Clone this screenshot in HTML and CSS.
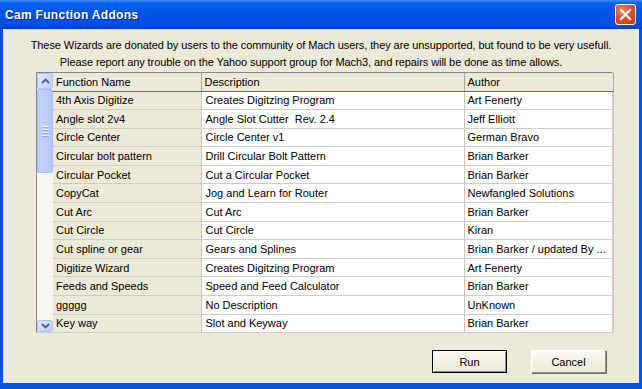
FILE: index.html
```html
<!DOCTYPE html>
<html lang="en">
<head>
    <meta charset="utf-8" />
    <title>Cam Function Addons</title>
    <link rel="stylesheet" href="styles.css">
</head>
<body>

<div class="window">
    <div class="titlebar">
        <span class="title">Cam Function Addons</span>
        <span class="close">
            <svg width="13" height="13" viewBox="0 0 13 13"><path d="M2 2 L11 11 M11 2 L2 11" stroke="#fff" stroke-width="2.2" stroke-linecap="square" /></svg>
        </span>
    </div>

    <div class="client">
        <div class="intro">
            <div>These Wizards are donated by users to the community of Mach users, they are unsupported, but found to be very usefull.</div>
            <div class="second">Please report any trouble on the Yahoo support group for Mach3, and repairs will be done as time allows.</div>
        </div>

        <div class="grid">
            <div class="scroll">
                <div class="sbtn up"><svg width="9" height="6" viewBox="0 0 9 6"><path d="M1 5 L4.5 1.5 L8 5" fill="none" stroke="#4d6185" stroke-width="1.8" /></svg></div>
                <div class="thumb"><span></span><span></span><span></span><span></span></div>
                <div class="track"></div>
                <div class="sbtn down"><svg width="9" height="6" viewBox="0 0 9 6"><path d="M1 1 L4.5 4.5 L8 1" fill="none" stroke="#4d6185" stroke-width="1.8" /></svg></div>
            </div>
            <table class="list">
                <colgroup>
                    <col class="c-name" />
                    <col class="c-desc" />
                    <col class="c-author" />
                </colgroup>
                <thead>
                    <tr><th>Function Name</th><th>Description</th><th>Author</th></tr>
                </thead>
                <tbody>
                    <tr><td>4th Axis Digitize</td><td>Creates Digitzing Program</td><td>Art Fenerty</td></tr>
                    <tr><td>Angle slot 2v4</td><td>Angle Slot Cutter&nbsp; Rev. 2.4</td><td>Jeff Elliott</td></tr>
                    <tr><td>Circle Center</td><td>Circle Center v1</td><td>German Bravo</td></tr>
                    <tr><td>Circular bolt pattern</td><td>Drill Circular Bolt Pattern</td><td>Brian Barker</td></tr>
                    <tr><td>Circular Pocket</td><td>Cut a Circular Pocket</td><td>Brian Barker</td></tr>
                    <tr><td>CopyCat</td><td>Jog and Learn for Router</td><td>Newfangled Solutions</td></tr>
                    <tr><td>Cut Arc</td><td>Cut Arc</td><td>Brian Barker</td></tr>
                    <tr><td>Cut Circle</td><td>Cut Circle</td><td>Kiran</td></tr>
                    <tr><td>Cut spline or gear</td><td>Gears and Splines</td><td>Brian Barker / updated By ...</td></tr>
                    <tr><td>Digitize Wizard</td><td>Creates Digitzing Program</td><td>Art Fenerty</td></tr>
                    <tr><td>Feeds and Speeds</td><td>Speed and Feed Calculator</td><td>Brian Barker</td></tr>
                    <tr><td>ggggg</td><td>No Description</td><td>UnKnown</td></tr>
                    <tr><td>Key way</td><td>Slot and Keyway</td><td>Brian Barker</td></tr>
                </tbody>
            </table>
        </div>

        <div class="buttons">
            <button class="btn default">Run</button>
            <button class="btn">Cancel</button>
        </div>
    </div>
</div>

</body>
</html>
```

FILE: styles.css
```css
body { margin: 0; font-family: "Liberation Sans", Arial, sans-serif; font-size: 11px; color: #000; }

.window { width: 642px; height: 389px; background: #0054e3; display: flex; flex-direction: column; overflow: hidden; }

.titlebar { height: 29px; flex: none; display: flex; align-items: center; justify-content: space-between; padding: 0 6px 0 5px; box-sizing: border-box;
    background: linear-gradient(#3a8cf7 0%, #0a64f0 10%, #0058e8 30%, #0054e3 60%, #0050dc 85%, #0040c0 100%); }
.title { color: #fff; font-weight: bold; font-size: 12px; letter-spacing: 0.3px; text-shadow: 1px 1px 0 #0a1e8c; }
.close { width: 19px; height: 19px; border: 1px solid #fff; border-radius: 3px; display: flex; align-items: center; justify-content: center;
    background: radial-gradient(circle at 35% 30%, #f08a6a 0%, #e0502c 45%, #c8381a 100%); }

.client { flex: 1; background: #ece9d8; margin: 0 3px 6px 3px; display: flex; flex-direction: column; }

.intro { text-align: center; line-height: 17px; padding-top: 8px; letter-spacing: -0.08px; }
.intro .second { padding-right: 20px; }

.grid { display: flex; margin: 1px 0 0 33px; width: 577px; height: 261px; box-sizing: border-box;
    border: 1px solid; border-color: #828790 #d4d0c8 #d4d0c8 #828790; background: #fff; }

.scroll { width: 16px; flex: none; display: flex; flex-direction: column; background: #f6f5f0; }
.sbtn { height: 16px; flex: none; box-sizing: border-box; border: 1px solid #b3c6f3; border-radius: 2px; display: flex; align-items: center; justify-content: center;
    background: linear-gradient(135deg, #e2eafd, #bccefa); }
.sbtn.down { height: 12px; }
.thumb { height: 84px; flex: none; box-sizing: border-box; border: 1px solid #a9bff2; border-radius: 2px; background: linear-gradient(90deg, #c2d3fb, #b4c8f7);
    display: flex; flex-direction: column; align-items: center; justify-content: center; gap: 1px; }
.thumb span { width: 7px; height: 1px; background: #eef3ff; border-bottom: 1px solid #8fa9e8; }
.track { flex: 1; }

.list { border-collapse: collapse; table-layout: fixed; width: 560px; }
.c-name { width: 148px; }
.c-desc { width: 263px; }
.c-author { width: 149px; }
.list th { height: 18px; padding: 0 3px; text-align: left; font-weight: normal; background: #ece9d8;
    border-right: 1px solid #aca899; border-bottom: 1px solid #716f64; box-sizing: border-box; }
.list td { height: 18.6px; padding: 0 3px 0 4px; white-space: nowrap; overflow: hidden; box-sizing: border-box;
    border-right: 1px solid #c8c6bd; border-bottom: 1px solid #cfcdc4; }
.list td:first-child { background: #ece9d8; padding-left: 3px; }
.list td:last-child { padding-left: 3px; }

.buttons { display: flex; justify-content: flex-end; gap: 24px; margin: 17px 33px 0 0; }
.btn { width: 75px; height: 23px; font: inherit; color: #000; background: linear-gradient(#fbfaf6, #ece9d8); border: 1px solid; border-color: #fff #8f8d84 #8f8d84 #fff;
    box-shadow: 1px 1px 0 #6b6a64; padding: 0; }
.btn.default { border-color: #000; box-shadow: inset 1px 1px 0 #fff, inset -1px -1px 0 #8f8d84; }
```
